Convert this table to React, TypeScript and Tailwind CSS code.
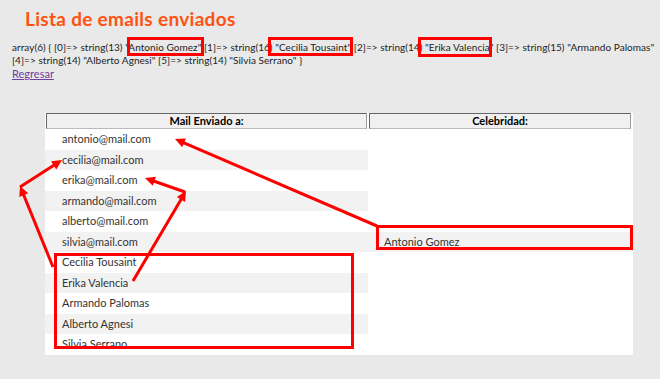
import React from 'react';

const EMAILS = [
  'antonio@mail.com',
  'cecilia@mail.com',
  'erika@mail.com',
  'armando@mail.com',
  'alberto@mail.com',
  'silvia@mail.com',
  'Cecilia Tousaint',
  'Erika Valencia',
  'Armando Palomas',
  'Alberto Agnesi',
  'Silvia Serrano',
];

function Arrow({ x1, y1, x2, y2 }: { x1: number; y1: number; x2: number; y2: number }) {
  const a = Math.atan2(y2 - y1, x2 - x1);
  const len = 11;
  const spread = 0.45;
  const p1 = [x2 - len * Math.cos(a - spread), y2 - len * Math.sin(a - spread)];
  const p2 = [x2 - len * Math.cos(a + spread), y2 - len * Math.sin(a + spread)];
  return (
    <g>
      <line x1={x1} y1={y1} x2={x2 - 6 * Math.cos(a)} y2={y2 - 6 * Math.sin(a)} stroke="#ff0000" strokeWidth={3} />
      <polygon points={`${x2},${y2} ${p1[0]},${p1[1]} ${p2[0]},${p2[1]}`} fill="#ff0000" />
    </g>
  );
}

export default function App() {
  return (
    <div className="relative w-[660px] h-[379px] overflow-hidden bg-[#e9e9e9] font-['Lato',sans-serif] text-[#333]">
      <h1 className="pl-[25px] pt-[7px] text-[19px] leading-[24px] font-bold tracking-[0.3px] text-[#ff5210]">
        Lista de emails enviados
      </h1>

      <div className="pl-[12px] pt-[10px] text-[10px] leading-[13px] text-[#222]">
        <p className="whitespace-nowrap tracking-[0.05px]">
          array(6) {'{'} [0]=&gt; string(13) "Antonio Gomez" [1]=&gt; string(16) "Cecilia Tousaint" [2]=&gt; string(14) "Erika Valencia" [3]=&gt; string(15) "Armando Palomas"
        </p>
        <p className="whitespace-nowrap tracking-[0.05px]">
          [4]=&gt; string(14) "Alberto Agnesi" [5]=&gt; string(14) "Silvia Serrano" {'}'}
        </p>
        <a className="text-[11px] text-[#6b3fa0] underline">Regresar</a>
      </div>

      {/* Table */}
      <div className="ml-[45px] mt-[32px] w-[588px] bg-white text-[11px]">
        <div className="grid grid-cols-[323px_265px]">
          <div className="ml-[1px] mr-[1px] h-[16px] border border-t-[#666] border-l-[#666] border-b-[#bbb] border-r-[#999] bg-[#f0f0f0] text-center font-bold text-black leading-[14px]">
            Mail Enviado a:
          </div>
          <div className="ml-[1px] mr-[2px] h-[16px] border border-t-[#666] border-l-[#666] border-b-[#bbb] border-r-[#999] bg-[#f0f0f0] text-center font-bold text-black leading-[14px]">
            Celebridad:
          </div>
          {EMAILS.map((e, i) => (
            <React.Fragment key={e}>
              <div className={`h-[20.5px] pl-[17px] leading-[20.5px] ${i % 2 === 1 ? 'bg-[#f2f2f2]' : ''}`}>{e}</div>
              <div className={`h-[20.5px] pl-[16px] leading-[20.5px] ${i === 5 ? 'bg-[#f2f2f2]' : ''}`}>
                {i === 5 ? 'Antonio Gomez' : ''}
              </div>
            </React.Fragment>
          ))}
        </div>
      </div>

      {/* annotations */}
      <svg className="absolute left-0 top-0 pointer-events-none" width={660} height={379}>
        <g fill="none" stroke="#ff0000" strokeWidth={3}>
          <rect x={128.5} y={38.5} width={74} height={16} />
          <rect x={269.5} y={38.5} width={82} height={16} />
          <rect x={419.5} y={38.5} width={71} height={17} />
          <rect x={377.5} y={226.5} width={254} height={22} />
          <rect x={55.5} y={254.5} width={297} height={93} />
        </g>
        <Arrow x1={53} y1={267} x2={20} y2={186} />
        <Arrow x1={20} y1={187} x2={62} y2={160} />
        <Arrow x1={133} y1={281} x2={186} y2={191} />
        <Arrow x1={185} y1={192} x2={145} y2={178} />
        <Arrow x1={377} y1={226} x2={175} y2={139} />
      </svg>
    </div>
  );
}
